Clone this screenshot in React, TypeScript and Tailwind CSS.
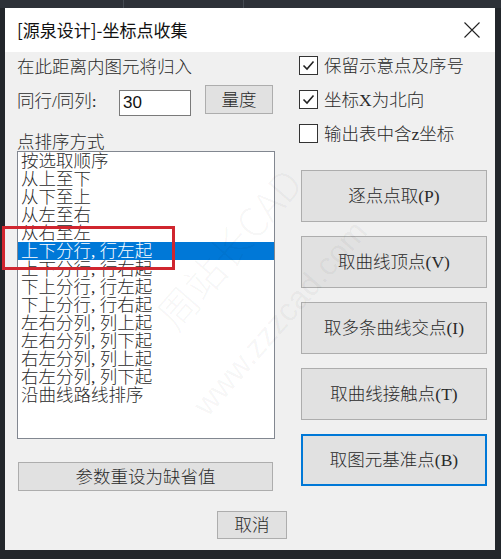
const sortModes = [
  "按选取顺序",
  "从上至下",
  "从下至上",
  "从左至右",
  "从右至左",
  "上下分行, 行左起",
  "上下分行, 行右起",
  "下上分行, 行左起",
  "下上分行, 行右起",
  "左右分列, 列上起",
  "左右分列, 列下起",
  "右左分列, 列上起",
  "右左分列, 列下起",
  "沿曲线路线排序",
];

const options = [
  { label: "保留示意点及序号", checked: true },
  { label: "坐标X为北向", checked: true },
  { label: "输出表中含z坐标", checked: false },
];

const actions = [
  "逐点点取(P)",
  "取曲线顶点(V)",
  "取多条曲线交点(I)",
  "取曲线接触点(T)",
  "取图元基准点(B)",
];

function CheckBox({ checked }: { checked: boolean }) {
  return (
    <div className="flex h-[19px] w-[19px] items-center justify-center border border-[#333] bg-white">
      {checked && (
        <svg width="15" height="15" viewBox="0 0 15 15">
          <polyline points="2.5,7.5 6,11 12.5,3.5" fill="none" stroke="#222" strokeWidth="1.6" />
        </svg>
      )}
    </div>
  );
}

export default function App() {
  return (
    <div className="relative h-[559px] w-[501px] overflow-hidden bg-[#22262b] font-['Liberation_Serif','Noto_Sans_CJK_SC',serif] text-[17.5px] font-light text-[#2a2a2a]">
      {/* window behind the dialog */}
      <div className="flex h-[8px] bg-[#2d3138]">
        <div className="w-[124px] border-r border-[#444a52]" />
        <div className="w-[120px] border-r border-[#444a52]" />
      </div>

      <div className="ml-[5px] flex h-[542px] w-[490px] flex-col bg-[#f0f0f0]">
        <div className="flex h-[44px] items-center justify-between bg-white pl-3 pr-[15px]">
          <span className="font-['Noto_Sans_CJK_SC',sans-serif] text-[17px] font-normal text-[#111]">[源泉设计]-坐标点收集</span>
          <svg width="16" height="16" viewBox="0 0 16 16">
            <path d="M0.5 0.5 L15.5 15.5 M15.5 0.5 L0.5 15.5" stroke="#222" strokeWidth="1.1" />
          </svg>
        </div>

        <div className="flex pl-3">
          {/* left column */}
          <div className="flex w-[270px] flex-col">
            <div className="mt-[6px] h-[18px] leading-[18px]">在此距离内图元将归入</div>

            <div className="mt-[9px] flex h-[31px] items-start">
              <span className="mt-[7px] w-[102px] leading-[18px]">同行/同列:</span>
              <div className="mt-[5px] flex h-[26px] w-[72px] items-center border border-[#7a7a7a] bg-white pl-[3px] font-['Liberation_Sans',sans-serif] text-[17px] font-normal text-[#111]">
                30
              </div>
              <button className="ml-[14px] h-[29px] w-[68px] border border-[#adadad] bg-[#e1e1e1] leading-[18px]">
                量度
              </button>
            </div>

            <div className="mt-[17px] h-[18px] leading-[18px]">点排序方式</div>

            <div className="h-[288px] w-[258px] border border-[#828790] bg-white">
              {sortModes.map((mode, i) => (
                <div
                  key={mode}
                  className={
                    i === 5
                      ? "h-[18px] whitespace-pre bg-[#0078d7] pl-[3px] leading-[18px] text-white"
                      : "h-[18px] whitespace-pre pl-[3px] leading-[18px]"
                  }
                >
                  {mode}
                </div>
              ))}
            </div>

            <button className="ml-[1px] mt-[23px] h-[29px] w-[255px] border border-[#adadad] bg-[#e1e1e1] leading-[18px]">
              参数重设为缺省值
            </button>

            <button className="ml-[200px] mt-[20px] h-[28px] w-[70px] border border-[#adadad] bg-[#e1e1e1] leading-[18px]">
              取消
            </button>
          </div>

          {/* right column */}
          <div className="ml-3 flex flex-col">
            <div className="mt-[4px] flex flex-col gap-[15px]">
              {options.map((opt) => (
                <div key={opt.label} className="flex h-[19px] items-center gap-[6px]">
                  <CheckBox checked={opt.checked} />
                  <span className="leading-[18px]">{opt.label}</span>
                </div>
              ))}
            </div>

            <div className="ml-[2px] mt-[27px] flex flex-col gap-[14px]">
              {actions.map((a, i) => (
                <button
                  key={a}
                  className={
                    i === 4
                      ? "h-[52px] w-[186px] border-2 border-[#0078d7] bg-[#e1e1e1] leading-[18px]"
                      : "h-[52px] w-[186px] border border-[#adadad] bg-[#e1e1e1] leading-[18px]"
                  }
                >
                  {a}
                </button>
              ))}
            </div>
          </div>
        </div>
      </div>

      {/* watermark */}
      <div className="pointer-events-none absolute left-[228px] top-[248px] -translate-x-1/2 -translate-y-1/2 rotate-[-49deg] whitespace-nowrap font-['Noto_Sans_CJK_SC',sans-serif] text-[40px] text-black/[0.045]">
        周站长CAD
      </div>
      <div className="pointer-events-none absolute left-[280px] top-[318px] -translate-x-1/2 -translate-y-1/2 rotate-[-49deg] whitespace-nowrap font-['Liberation_Sans',sans-serif] text-[32px] text-black/[0.045]">
        www.zzzcad.com
      </div>

      {/* annotation */}
      <div className="pointer-events-none absolute left-[2px] top-[226px] h-[44px] w-[173px] border-[3px] border-[#d0262f]" />
    </div>
  );
}
